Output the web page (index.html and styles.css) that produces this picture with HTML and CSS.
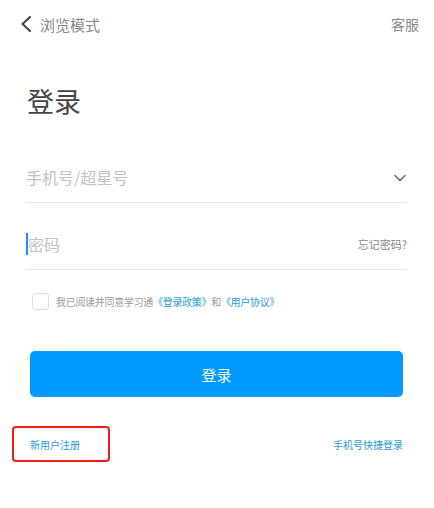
FILE: index.html
```html
<!DOCTYPE html>
<html lang="zh-CN">
<head>
    <meta charset="UTF-8">
    <meta name="viewport" content="width=device-width, initial-scale=1.0">
    <title>登录</title>
    <link rel="stylesheet" href="styles.css">
</head>
<body>

<!-- Top bar -->
<div class="top-bar">
    <div class="back">
        <svg class="back-icon" width="12" height="16" viewBox="0 0 12 16">
            <path d="M10 1 L2.5 8 L10 15" fill="none" stroke="#444" stroke-width="2" stroke-linecap="round" stroke-linejoin="round"/>
        </svg>
        <span>浏览模式</span>
    </div>
    <span class="service">客服</span>
</div>

<div class="main">
    <h1>登录</h1>

    <!-- Account field -->
    <div class="field">
        <span class="placeholder">手机号/超星号</span>
        <svg class="arrow" width="12" height="8" viewBox="0 0 12 8">
            <path d="M1 1.5 L6 6.5 L11 1.5" fill="none" stroke="#666" stroke-width="1.5" stroke-linecap="round" stroke-linejoin="round"/>
        </svg>
    </div>

    <!-- Password field -->
    <div class="field password">
        <span class="cursor"></span>
        <span class="placeholder">密码</span>
        <span class="forgot">忘记密码?</span>
    </div>

    <!-- Agreement -->
    <div class="agree">
        <span class="checkbox"></span>
        <span>我已阅读并同意学习通<a class="link">《登录政策》</a>和<a class="link">《用户协议》</a></span>
    </div>

    <button class="login-btn">登录</button>
</div>

<div class="bottom">
    <div class="register-box">
        <a class="link">新用户注册</a>
    </div>
    <a class="link">手机号快捷登录</a>
</div>

</body>
</html>
```

FILE: styles.css
```css
body {
    margin: 0;
    background-color: #fff;
    font-family: "Noto Sans CJK SC", "Noto Sans", sans-serif;
    color: #333;
}
.top-bar {
    height: 48px;
    display: flex;
    align-items: center;
    justify-content: space-between;
    padding: 0 15px 0 20px;
    color: #888;
}
.back {
    display: flex;
    align-items: center;
    gap: 8px;
    font-size: 15px;
}
.back-icon {
    display: block;
}
.service {
    font-size: 14px;
}
.main {
    padding: 0 27px 0 26px;
}
h1 {
    margin: 35px 0 33px 1px;
    font-size: 27px;
    font-weight: normal;
    line-height: 36px;
    color: #444;
}
.field {
    height: 50px;
    display: flex;
    align-items: center;
    justify-content: space-between;
    border-bottom: 1px solid #e6e6e6;
}
.field.password {
    margin-top: 16px;
    height: 50px;
    justify-content: flex-start;
}
.placeholder {
    font-size: 16px;
    color: #c2c2c2;
}
.arrow {
    margin-right: 1px;
    margin-top: 2px;
}
.cursor {
    width: 2px;
    height: 22px;
    background-color: #1a8cff;
}
.forgot {
    margin-left: auto;
    font-size: 11px;
    color: #888;
}
.agree {
    display: flex;
    align-items: center;
    gap: 7px;
    margin: 23px 0 0 6px;
    font-size: 10px;
    letter-spacing: -0.3px;
    color: #999;
}
.checkbox {
    width: 15px;
    height: 15px;
    border: 1px solid #ddd;
    border-radius: 3px;
}
.link {
    color: #2d9ad8;
}
.login-btn {
    display: block;
    width: 373px;
    height: 46px;
    margin: 41px 4px 0;
    border: none;
    border-radius: 5px;
    background-color: #0099ff;
    color: #fff;
    font-family: inherit;
    font-size: 15px;
}
.bottom {
    display: flex;
    align-items: center;
    justify-content: space-between;
    padding: 0 31px 0 12px;
    margin-top: 29px;
    font-size: 10px;
}
.register-box {
    width: 78px;
    height: 32px;
    padding-left: 16px;
    display: flex;
    align-items: center;
    border: 2px solid #f21b1b;
    border-radius: 4px;
}
```
